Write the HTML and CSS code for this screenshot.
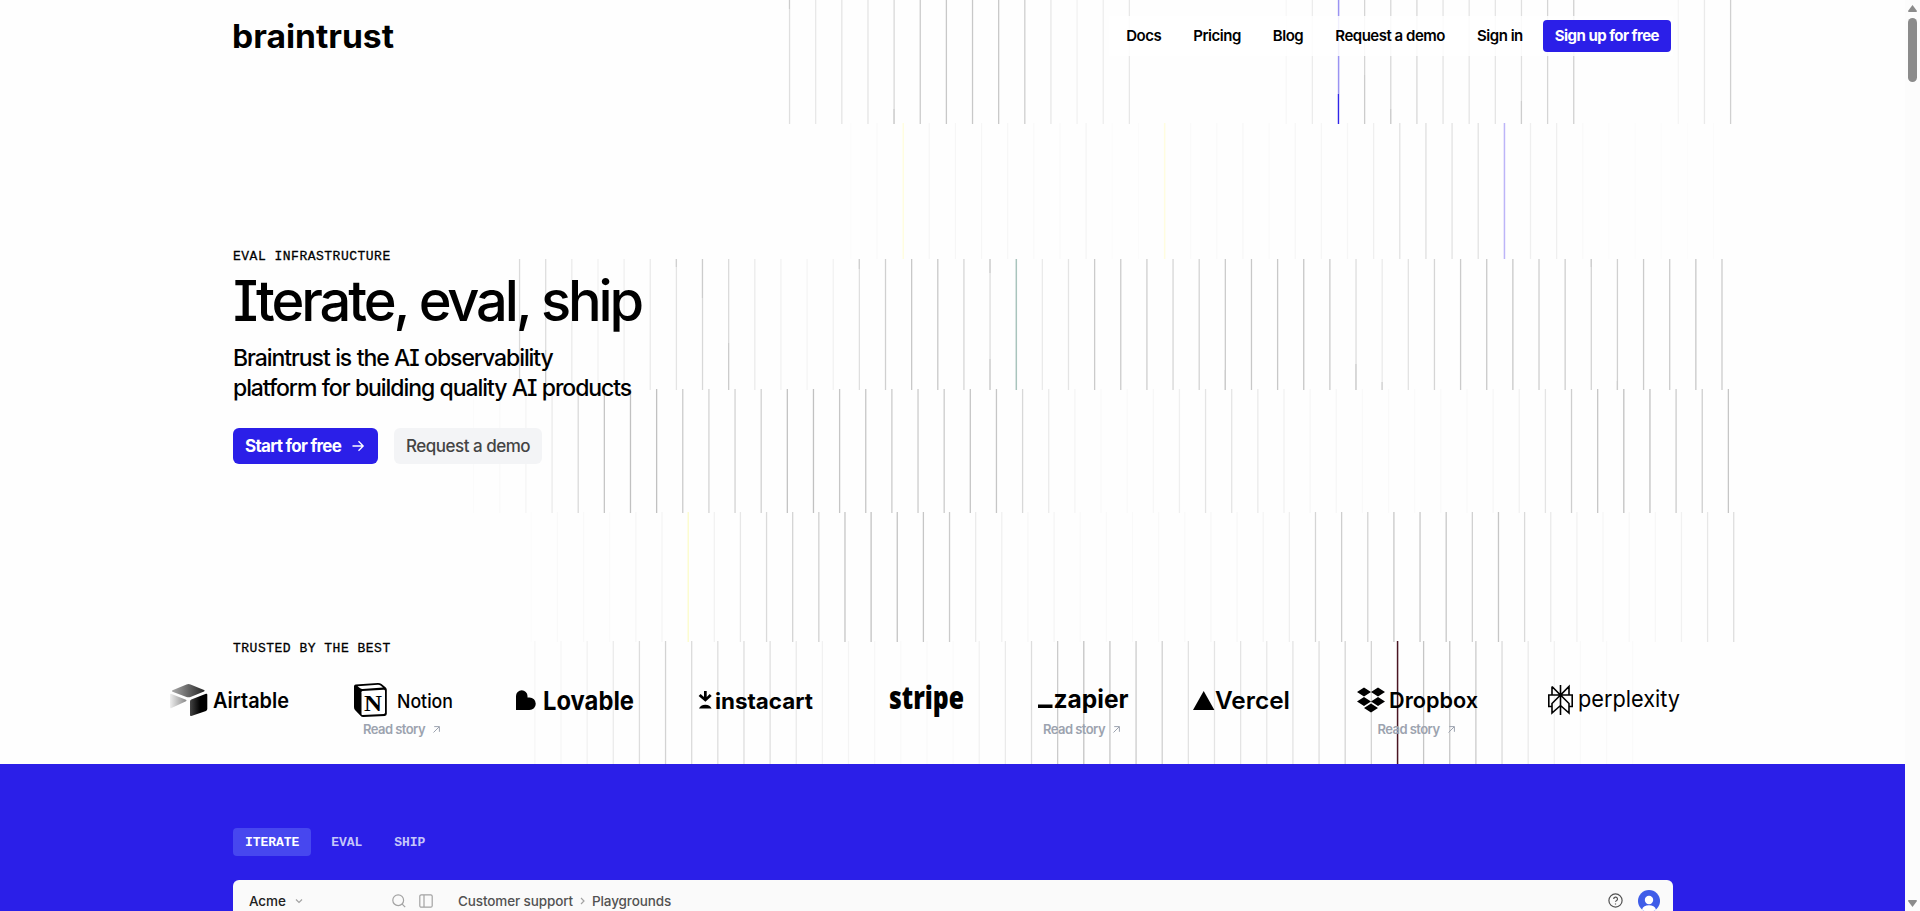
FILE: index.html
```html
<!DOCTYPE html>
<html lang="en">
<head>
  <meta charset="UTF-8">
  <title>Braintrust</title>
  <link rel="stylesheet" href="styles.css">
</head>
<body>
  <div class="page">
    <svg class="lines" id="lines" width="1905" height="764"></svg>

    <header class="header">
      <a class="brand"><svg width="162" height="32"><text x="-1" y="27.500" textLength="162" lengthAdjust="spacingAndGlyphs">braintrust</text></svg></a>
      <nav class="nav">
        <a>Docs</a>
        <a>Pricing</a>
        <a>Blog</a>
        <a>Request a demo</a>
        <a>Sign in</a>
        <a class="signup">Sign up for free</a>
      </nav>
    </header>

    <section class="hero">
      <p class="eyebrow">Eval infrastructure</p>
      <h1>Iterate, eval, ship</h1>
      <p class="sub">Braintrust is the AI observability<br>platform for building quality AI products</p>
      <div class="cta">
        <a class="btn primary">Start for free
          <svg width="12" height="12" viewBox="0 0 12 12"><path d="M.5 6h10.5M6.5 1.2 11.2 6 6.5 10.8"/></svg>
        </a>
        <a class="btn">Request a demo</a>
      </div>
    </section>

    <section class="trusted">
      <p class="eyebrow">Trusted by the best</p>
      <div class="logos">
        <div class="logo airtable">
          <svg width="119" height="36">
            <defs>
              <linearGradient id="g1"><stop offset="0" stop-color="#aaa"/><stop offset="1" stop-color="#222"/></linearGradient>
              <linearGradient id="g2"><stop offset="0" stop-color="#eee"/><stop offset="1" stop-color="#888"/></linearGradient>
              <linearGradient id="g3"><stop offset="0" stop-color="#444"/><stop offset=".6" stop-color="#000"/></linearGradient>
            </defs>
            <path fill="url(#g1)" d="M2.5 8.300 16.500 2.400q2-.7 4 0L34 8q1.500.8 0 1.600L20.500 15q-2 .7-4 0L2.500 9.700q-1.300-.7 0-1.400z"/>
            <path fill="url(#g2)" d="M0 13q0-1.600 1.500-1L16 17.800q1.200.7 0 1.400L1.500 26Q0 26.700 0 25z"/>
            <path fill="url(#g3)" d="M20 19.500q0-1.500 1.300-2L36 11.800q1.300-.4 1.300 1V27q0 1.300-1.300 1.900L21.300 34q-1.300.4-1.300-1z"/>
            <text class="w600" x="43" y="26" font-size="21" textLength="76" lengthAdjust="spacingAndGlyphs">Airtable</text>
          </svg>
        </div>
        <div class="logo notion">
          <svg width="99" height="36">
            <path d="M0 4.500q0-1.700 1.700-1.900L24 1q2 0 3.500 1l4 3.200q1.300 1 1.300 2.500v24q0 2-2 2.300L9.500 35q-2 .1-3-1.200L1 28q-1-1.200-1-3z"/>
            <path fill="#fff" d="M3.500 4.200 24 2.800q1.500 0 2.500.7l2.500 2L8.500 7q-1.300.1-2.300-.7z"/>
            <path fill="#fff" d="M7.500 10.300q0-1.200 1.200-1.300L29.800 7.700q1.200 0 1.200 1.200v21.600q0 1.300-1.200 1.400L8.700 33.100q-1.200 0-1.200-1.200z"/>
            <text class="serif" x="10" y="28.500" font-size="23" textLength="18" lengthAdjust="spacingAndGlyphs">N</text>
            <text class="w500" x="43" y="26" font-size="19" textLength="56" lengthAdjust="spacingAndGlyphs">Notion</text>
          </svg>
          <a class="story">Read story<svg width="7" height="7" viewBox="0 0 7 7"><path d="M.5 6.500 6.200.800M1.200.600H6.400V5.800"/></svg></a>
        </div>
        <div class="logo lovable">
          <svg width="117" height="36">
            <path d="M0 14a5.700 5.700 0 0 1 11.500 0v1.500h2a6.200 6.200 0 0 1 0 12.500H0z"/>
            <text class="w700" x="27" y="28" font-size="26" textLength="91" lengthAdjust="spacingAndGlyphs">Lovable</text>
          </svg>
        </div>
        <div class="logo instacart">
          <svg width="116" height="36">
            <path d="M1 26.500a6.600 5.500 0 0 1 12.600 0zM6 9h2.700v6l3-3 2 2-6.300 5.800L.6 14l2-2 3.400 3z"/>
            <text class="w700" x="17" y="26.500" font-size="22" textLength="98" lengthAdjust="spacingAndGlyphs">instacart</text>
          </svg>
        </div>
        <div class="logo stripe">
          <svg width="75" height="36">
            <text class="stripe-text" x="0" y="27" font-size="31" textLength="75" lengthAdjust="spacingAndGlyphs">stripe</text>
          </svg>
        </div>
        <div class="logo zapier">
          <svg width="91" height="36">
            <path d="M0 22.500h14.500V26H0z"/>
            <text class="w700" x="15.500" y="26" font-size="25" textLength="75" lengthAdjust="spacingAndGlyphs">zapier</text>
          </svg>
          <a class="story">Read story<svg width="7" height="7" viewBox="0 0 7 7"><path d="M.5 6.500 6.200.800M1.200.600H6.400V5.800"/></svg></a>
        </div>
        <div class="logo vercel">
          <svg width="97" height="36">
            <path d="M10.700 9 21.400 28H0z"/>
            <text class="w600" x="22" y="27" font-size="24" textLength="75" lengthAdjust="spacingAndGlyphs">Vercel</text>
          </svg>
        </div>
        <div class="logo dropbox">
          <svg width="122" height="36">
            <path d="m7 5.500 7 4.500-7 4.500L0 10zM21 5.500l7 4.500-7 4.500-7-4.500zM7 15l7 4.500L7 24l-7-4.500zM21 15l7 4.500-7 4.500-7-4.500zM14 21.500l7 4.500-7 4.500L7 26z"/>
            <text class="w600" x="32" y="26" font-size="22" textLength="89" lengthAdjust="spacingAndGlyphs">Dropbox</text>
          </svg>
          <a class="story">Read story<svg width="7" height="7" viewBox="0 0 7 7"><path d="M.5 6.500 6.200.800M1.200.600H6.400V5.800"/></svg></a>
        </div>
        <div class="logo perplexity">
          <svg width="132" height="36">
            <path class="stroke" d="M12.500 3v30M4 4.500l8.500 8.500L21 4.500V13M4 4.500V13M12.500 13H.8v11.500H4M12.500 13h11.700v11.500H21M12.500 13 4 21.500V31l8.500-7.500M12.500 13l8.500 8.500V31l-8.500-7.500"/>
            <text class="w400" x="30" y="25" font-size="23" textLength="102" lengthAdjust="spacingAndGlyphs">perplexity</text>
          </svg>
        </div>
      </div>
    </section>

    <section class="product">
      <div class="tabs">
        <a class="tab active">Iterate</a>
        <a class="tab">Eval</a>
        <a class="tab">Ship</a>
      </div>
      <div class="app">
        <div class="org">
          <span>Acme</span>
          <svg width="8" height="8" viewBox="0 0 8 8"><path d="M1 2.500 4 5.500 7 2.500"/></svg>
        </div>
        <div class="tools">
          <svg width="14" height="14" viewBox="0 0 14 14"><circle cx="6.200" cy="6.200" r="5.400"/><path d="m10.200 10.200 3 3"/></svg>
          <svg width="14" height="14" viewBox="0 0 14 14"><rect x=".8" y=".8" width="12.400" height="12.400" rx="1.500"/><path d="M5 1v12"/></svg>
        </div>
        <div class="crumbs">
          <span>Customer support</span>
          <svg width="5" height="8" viewBox="0 0 5 8"><path d="M1 1l3 3-3 3"/></svg>
          <span>Playgrounds</span>
        </div>
        <svg class="help" width="15" height="15" viewBox="0 0 15 15"><circle cx="7.500" cy="7.500" r="6.600"/><path d="M5.700 6a1.900 1.900 0 1 1 2.700 1.700c-.6.3-.9.600-.9 1.100M7.500 10.600v.8"/></svg>
        <svg class="avatar" width="22" height="22" viewBox="0 0 22 22"><circle cx="11" cy="11" r="11" fill="#3f5de8"/><circle cx="11" cy="10" r="4.200" fill="#fff"/><path d="M4 19.500C5 16.500 7.500 15.200 11 15.200s6 1.300 7 4.300A11 11 0 0 1 4 19.500z" fill="#fff"/></svg>
      </div>
    </section>
  </div>

  <div class="scrollbar">
    <svg width="9" height="7" viewBox="0 0 9 7"><path d="M4.500 0 9 6q0 1-1 1H1q-1 0-1-1z"/></svg>
    <div class="thumb"></div>
    <svg width="9" height="7" viewBox="0 0 9 7"><path d="M4.500 7 9 1q0-1-1-1H1Q0 0 0 1z"/></svg>
  </div>

  <script src="lines.js"></script>
</body>
</html>
```
FILE: styles.css
```css
* { box-sizing: border-box; }
body {
  margin: 0;
  display: flex;
  height: 911px;
  overflow: hidden;
  background: #fefefe;
  color: #000;
  font-family: Inter, "Liberation Sans", sans-serif;
  font-feature-settings: "cv08";
}
p, h1 { margin: 0; }
svg { overflow: visible; }
.page { position: relative; width: 1905px; height: 911px; overflow: hidden; }
.lines { position: absolute; left: 0; top: 0; }

.header {
  position: relative;
  display: flex;
  justify-content: space-between;
  height: 56px;
  padding: 16px 232px 0 233px;
}
.brand { padding-top: 4px; }
.brand text { font-size: 32px; font-weight: 650; }
.nav {
  display: flex;
  align-items: center;
  height: 40px;
  padding: 0 2px 0 1px;
  background: rgba(255, 255, 255, .85);
}
.nav a { padding: 0 16px 1px; font-size: 15px; font-weight: 600; letter-spacing: -.48px; white-space: nowrap; }
.nav .signup {
  margin-left: 4px;
  padding: 0 12px;
  line-height: 32px;
  border-radius: 4px;
  background: #2b1fe8;
  color: #fff;
  font-weight: 700;
  letter-spacing: -.53px;
}

.eyebrow {
  font: 13px/16px "Liberation Mono", monospace;
  -webkit-text-stroke: .3px #000;
  letter-spacing: .5px;
  text-transform: uppercase;
}
.hero { position: relative; height: 585px; padding: 193px 0 0 233px; }
h1 { margin-top: 2px; font-size: 56px; line-height: 68px; font-weight: 550; letter-spacing: -3.1px; white-space: nowrap; }
.sub { margin-top: 8px; font-size: 23px; line-height: 30px; font-weight: 450; letter-spacing: -1.07px; word-spacing: .4px; white-space: nowrap; }
.cta { display: flex; gap: 16px; margin-top: 25px; }
.btn {
  display: flex;
  align-items: center;
  height: 36px;
  padding: 0 12px;
  border-radius: 6px;
  background: #f3f4f6;
  color: #444;
  font-size: 17px;
  font-weight: 500;
  letter-spacing: -.5px;
}
.btn.primary { width: 145px; background: #2b1fe8; color: #fff; font-weight: 700; letter-spacing: -.72px; }
.btn svg { margin-left: 11px; fill: none; stroke: #fff; stroke-width: 1.300; }

.trusted { position: relative; height: 123px; }
.trusted .eyebrow { padding-left: 233px; }
.logos { display: flex; margin: 25px 0 0 170px; }
.logo { display: flex; flex-direction: column; align-items: center; }
.logo > svg { flex: none; }
.notion { margin-left: 65px; }
.lovable { margin-left: 63px; }
.instacart { margin-left: 65px; }
.stripe { margin-left: 75px; }
.zapier { margin-left: 74px; }
.vercel { margin-left: 64px; }
.dropbox { margin-left: 67px; }
.perplexity { margin-left: 69px; }
.w400 { font-weight: 400; }
.w500 { font-weight: 500; }
.w600 { font-weight: 600; }
.w700 { font-weight: 700; }
.stripe-text { font-family: "Open Sans", sans-serif; font-weight: 800; }
.serif { font-family: "Liberation Serif", serif; font-weight: 700; }
.stroke { fill: none; stroke: #000; stroke-width: 1.600; }
.story {
  display: flex;
  align-items: center;
  gap: 8px;
  margin: 3px 4px 0 0;
  color: #9ca3af;
  font-size: 13px;
  line-height: 16px;
  font-weight: 600;
  letter-spacing: -.55px;
}
.story svg { fill: none; stroke: #9ca3af; }

.product { position: relative; height: 147px; padding: 64px 232px 0 233px; background: #2b1fe8; }
.tabs { display: flex; gap: 8px; }
.tab {
  height: 28px;
  padding: 1px 12px 0;
  border-radius: 4px;
  color: #c5c6f9;
  font: bold 13px/28px "Liberation Mono", monospace;
  letter-spacing: -.05px;
  text-transform: uppercase;
}
.tab.active { background: #4747ef; color: #fff; }
.app {
  display: flex;
  align-items: center;
  height: 60px;
  margin-top: 24px;
  padding: 0 13px 19px 16px;
  border-radius: 6px 6px 0 0;
  background: #fafafa;
  font-size: 13.500px;
  font-weight: 500;
  letter-spacing: -.12px;
}
.app svg { fill: none; stroke: #a3a3a3; stroke-width: 1.200; }
.org { display: flex; align-items: center; gap: 9px; width: 143px; color: #222; }
.tools { display: flex; gap: 13px; width: 66px; }
.crumbs { display: flex; align-items: center; gap: 7px; flex: 1; color: #525252; }
.app .help { margin-right: 15px; stroke: #525252; }
.app .avatar { stroke: none; }

.scrollbar { display: flex; flex-direction: column; align-items: center; width: 15px; height: 911px; padding: 5px 0 4px; background: #fcfcfc; }
.scrollbar svg { fill: #8b8b8b; }
.thumb { width: 9px; height: 64px; margin: 6px 0 auto; border-radius: 5px; background: #8b8b8b; }
```
FILE: lines.js
```js
// each row: top, height, x of first line, opacity per line (or a colour)
const PITCH = 26.14;
const rows = [
  [0, 124, 788.9, [.12,.09,.1,.1,.15,.2,.21,.21,.21,.19,.09,.05,.07,.09,0,0,0,0,0,.03,.07,'#9a93f2',.16,.15,.15,.11,.1,.1,.12,.16,.18,0,0,0,.04,.08,.18]],
  [123, 136, 850.2, [.01,.02,'#fffde0',.03,.03,.03,.03,.02,.02,.04,.01,.01,'#fffde0',.02,.02,.03,.02,.03,.03,.03,.06,.11,.12,.11,.11,'#bdb5f8',.06,.06,.02,.01,.01,.01,.01,.01]],
  [259, 131, 518.9, [.14,.13,.08,.05,.06,.08,.1,.15,.14,.08,.05,.04,.05,.12,.18,.21,.21,.16,.13,'#a9c4bd',.08,.1,.2,.2,.19,.16,.17,.2,.21,.21,.22,.2,.13,.08,.11,.16,.2,.21,.21,.19,.19,.17,.18,.2,.2,.21,.2]],
  [389, 124, 473, [.01,.02,.04,.08,.14,.22,.24,.24,.2,.17,.17,.18,.23,.24,.22,.22,.2,.2,.2,.22,.22,.15,.08,.04,.02,.02,.03,.06,.1,.1,.08,.05,.03,.03,.02,.02,.02,.02,.02,.03,.05,.1,.19,.22,.24,.24,.2,.19,.22]],
  [512, 130, 504.5, [0,.01,.02,.02,.02,.03,.04,'#fcfcd0',.05,.09,.14,.17,.18,.22,.23,.23,.22,.2,.08,.06,.03,.04,.02,.02,.02,.02,.02,.03,.03,.04,.06,.16,.19,.17,.21,.21,.21,.18,.22,.14,.08,.05,.03,.03,.03,.05,.09,.13]],
  [641, 123, 534.2, [.03,.03,.05,.08,.13,.17,.14,.13,.13,.12,.08,.05,.04,.03,.02,.02,.02,.05,.08,.13,.2,.23,.22,.2,.18,.11,.1,.1,.09,.11,.13,.16,.17,'#4a1522',.22,.22,.2,.14,.08,.05,.02,.02,.02]]
];
// darker pieces on top of a line: row, index, y, height, colour
const marks = [
  [0, 0, 0, 9, '#ccc'], [0, 21, 94, 30, '#2b1fe8'], [0, 4, 109, 15, '#ccc'],
  [0, 22, 75, 49, '#ccc'], [0, 23, 109, 15, '#ccc'], [0, 28, 101, 23, '#ccc'],
  [2, 1, 350, 40, '#ccc'], [2, 6, 259, 8, '#ccc'], [2, 7, 259, 39, '#ccc'],
  [2, 8, 343, 47, '#ccc'], [2, 13, 259, 10, '#ccc'], [2, 18, 259, 14, '#ccc'],
  [2, 18, 359, 31, '#ccc'], [2, 32, 364, 26, '#ccc'], [2, 33, 382, 8, '#ccc'],
  [2, 27, 370, 20, '#ccc'], [2, 41, 259, 8, '#ccc'], [2, 42, 381, 9, '#ccc']
];
let out = '';
function line(r, i, y, h, fill, w) {
  const x = rows[r][2] + i * PITCH;
  out += `<rect x="${x.toFixed(2)}" y="${y}" width="${w}" height="${h}" fill="${fill}"/>`;
}
rows.forEach(([y, h, x, list], r) => list.forEach((v, i) => {
  if (!v) return;
  if (typeof v == 'string') line(r, i, y, h, v, 1.5);
  else line(r, i, y, h, `rgba(0,0,0,${v})`, 1.3);
}));
marks.forEach(m => line(m[0], m[1], m[2], m[3], m[4], 1.1));
document.getElementById('lines').innerHTML = out;
```
